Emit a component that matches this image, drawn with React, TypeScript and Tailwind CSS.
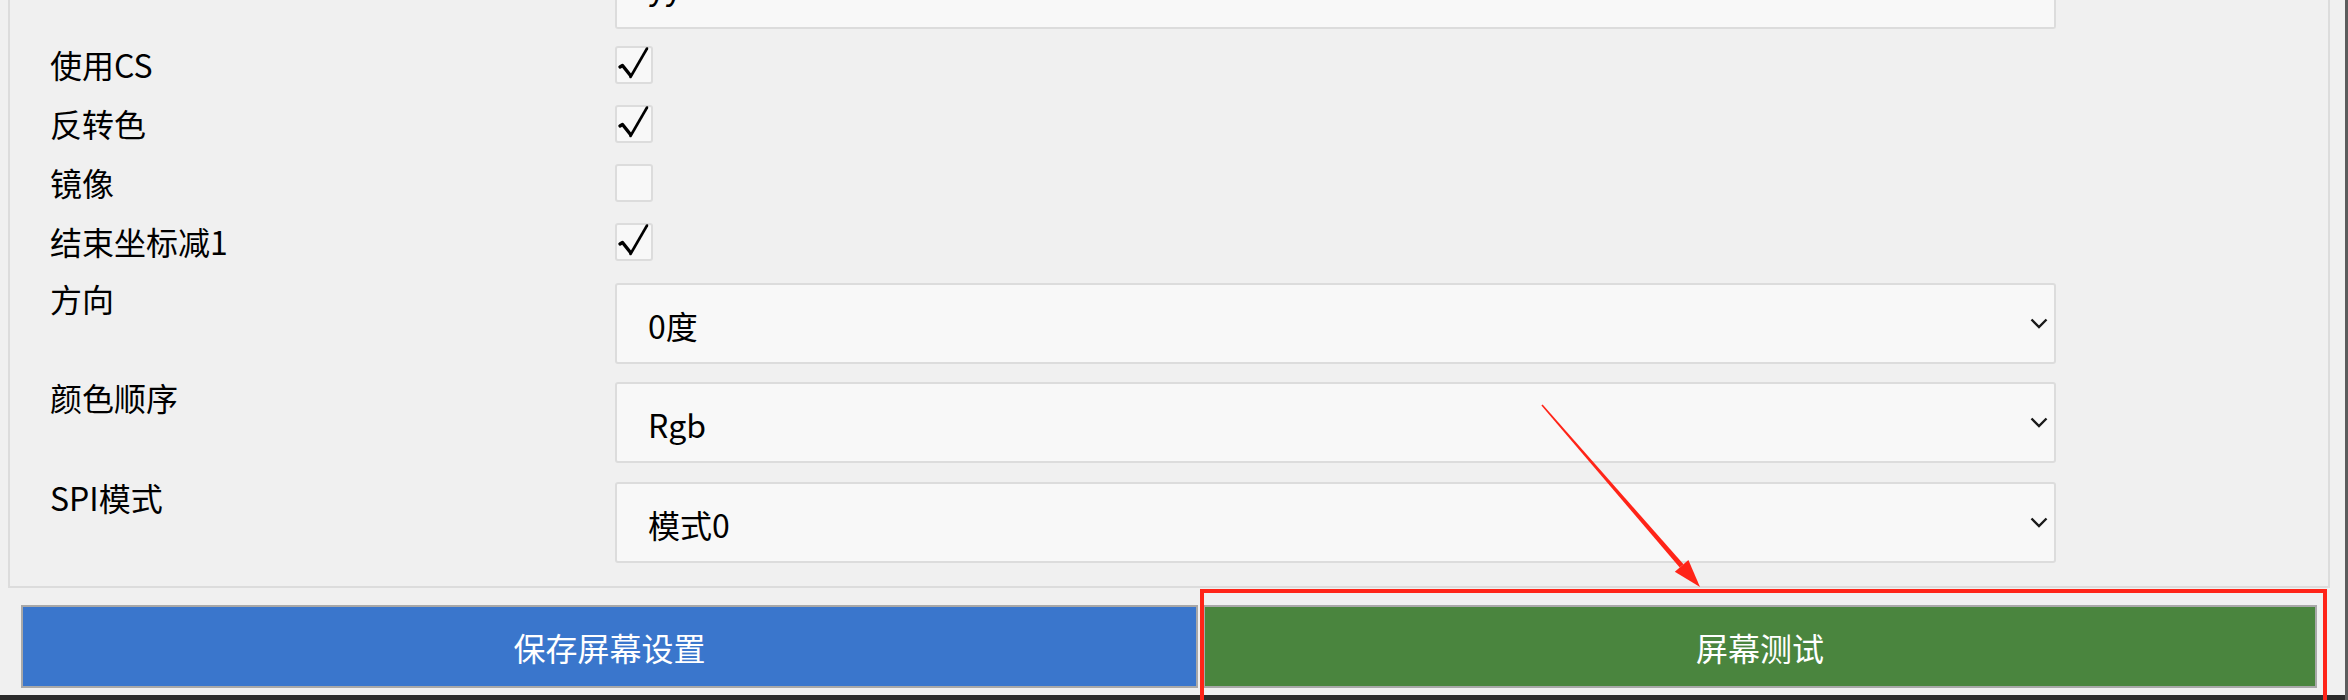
import React from 'react';

const font = "font-['Noto_Sans_CJK_SC','Noto_Sans',sans-serif]";

function Check({ checked }: { checked: boolean }) {
  return (
    <div className="w-[38px] h-[38px] rounded-[3px] border-2 border-[#dcdcdc] bg-[#f8f8f8] relative">
      {checked && (
        <svg width="38" height="38" viewBox="0 0 38 38" className="absolute -left-[2px] -top-[2px]">
          <path d="M5 21 L7.5 19.5 L15.5 29.5" stroke="#000" strokeWidth="3.4" fill="none" strokeLinecap="round" strokeLinejoin="round" />
          <path d="M15.5 31 L32 2.5" stroke="#000" strokeWidth="2.6" fill="none" strokeLinecap="round" />
        </svg>
      )}
    </div>
  );
}

function Chevron() {
  return (
    <svg width="18" height="11" viewBox="0 0 18 11">
      <polyline points="1.5,1.5 9,9 16.5,1.5" stroke="#1a1a1a" strokeWidth="2.4" fill="none" />
    </svg>
  );
}

function CheckRow({ label, checked, first }: { label: string; checked: boolean; first?: boolean }) {
  return (
    <div className={`flex items-center h-[38px] ${first ? 'mt-[17px]' : 'mt-[21px]'}`}>
      <div className="w-[565px] text-[32px] leading-[44px] text-black -mt-[3px]">{label}</div>
      <Check checked={checked} />
    </div>
  );
}

function SelectRow({ label, value, mt }: { label: string; value: string; mt: string }) {
  return (
    <div className={`flex items-start ${mt}`}>
      <div className="w-[565px] text-[32px] leading-[44px] text-black -mt-[7px]">{label}</div>
      <div className="w-[1441px] h-[81px] rounded-[3px] border-2 border-[#dcdcdc] bg-[#f8f8f8] flex items-center justify-between pl-[31px] pr-[6px]">
        <span className="text-[32px] leading-[44px] text-black mt-[3px]">{value}</span>
        <Chevron />
      </div>
    </div>
  );
}

export default function App() {
  return (
    <div className={`relative w-[2348px] h-[700px] overflow-hidden bg-[#f0f0f0] flex ${font}`}>
      <div className="flex-1 flex flex-col">
        <div className="flex-1 flex flex-col">
          {/* settings panel */}
          <div className="ml-[8px] w-[2322px] border-x-2 border-b-2 border-[#dcdcdc] pl-[40px] pb-[23px]">
            <div className="flex">
              <div className="w-[565px]" />
              <div className="w-[1441px] h-[29px] overflow-hidden rounded-b-[3px] border-x-2 border-b-2 border-[#dcdcdc] bg-[#f8f8f8] pl-[31px]">
                <div className="text-[32px] leading-[44px] text-black -mt-[36px]">yy</div>
              </div>
            </div>
            <CheckRow label="使用CS" checked first />
            <CheckRow label="反转色" checked />
            <CheckRow label="镜像" checked={false} />
            <CheckRow label="结束坐标减1" checked />
            <SelectRow label="方向" value="0度" mt="mt-[22px]" />
            <SelectRow label="颜色顺序" value="Rgb" mt="mt-[18px]" />
            <SelectRow label="SPI模式" value="模式0" mt="mt-[19px]" />
          </div>

          {/* action buttons */}
          <div className="mt-[17px] ml-[21px] flex gap-[5px]">
            <button className="w-[1177px] h-[83px] border-2 border-[#a8a8a8] bg-[#3a76cc] text-white text-[32px] leading-[44px]">
              保存屏幕设置
            </button>
            <button className="w-[1114px] h-[83px] border-2 border-[#a8a8a8] bg-[#4a853e] text-white text-[32px] leading-[44px]">
              屏幕测试
            </button>
          </div>
        </div>
        <div className="h-[5px] bg-[#2b2b2b]" />
      </div>
      <div className="w-[3px] bg-[#5c5c5c]" />

      {/* annotation overlay */}
      <div className="absolute left-[1200px] top-[589px] w-[1127px] h-[120px] border-4 border-[#ff2418]" />
      <svg className="absolute left-0 top-0 pointer-events-none" width="2348" height="700">
        <polygon points="1541.4,405.5 1542.6,404.5 1683.5,564.3 1679.7,567.5" fill="#ff2418" />
        <polygon points="1700,587 1674.8,571.8 1688.4,560" fill="#ff2418" />
      </svg>
    </div>
  );
}
